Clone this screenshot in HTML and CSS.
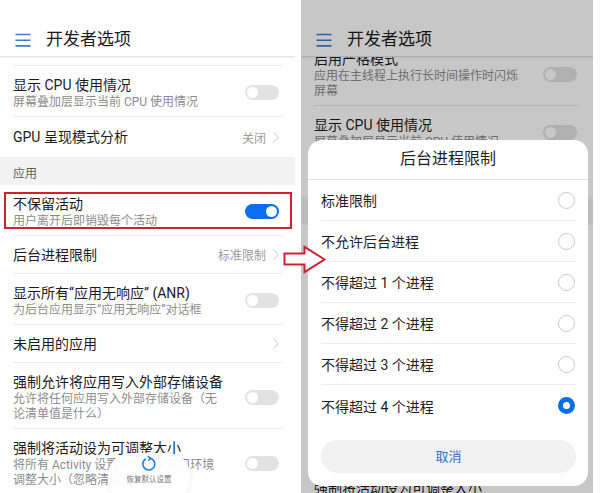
FILE: index.html
```html
<!DOCTYPE html>
<html lang="zh-CN">
<head>
<meta charset="utf-8">
<title>开发者选项</title>
<link rel="stylesheet" href="styles.css">
</head>
<body>
<div class="page">
  <div class="screen left">
    <header class="appbar">
      <svg class="menu" width="16" height="14" viewBox="0 0 16 14"><path d="M0.5 1.5H15.5M0.5 7.2H15.5M0.5 12.9H15.5" stroke="#3d7cc6" stroke-width="1.6" fill="none"/></svg>
      <span class="title">开发者选项</span>
    </header>
    <div class="list">
      <div class="stub"></div>
      <div class="item">
        <div class="text"><div class="t">显示 CPU 使用情况</div><div class="s">屏幕叠加层显示当前 CPU 使用情况</div></div>
        <span class="toggle"></span>
      </div>
      <div class="item single last">
        <div class="text"><div class="t">GPU 呈现模式分析</div></div>
        <span class="value">关闭</span><svg class="chev" width="6" height="11" viewBox="0 0 6 11"><path d="M0.7 0.7L5.2 5.5L0.7 10.3" stroke="#c4c4c4" stroke-width="1" fill="none"/></svg>
      </div>
      <div class="section">应用</div>
      <div class="item">
        <div class="text"><div class="t">不保留活动</div><div class="s">用户离开后即销毁每个活动</div></div>
        <span class="toggle on"></span>
      </div>
      <div class="item single">
        <div class="text"><div class="t">后台进程限制</div></div>
        <span class="value">标准限制</span><svg class="chev" width="6" height="11" viewBox="0 0 6 11"><path d="M0.7 0.7L5.2 5.5L0.7 10.3" stroke="#c4c4c4" stroke-width="1" fill="none"/></svg>
      </div>
      <div class="item">
        <div class="text"><div class="t">显示所有“应用无响应” (ANR)</div><div class="s">为后台应用显示“应用无响应”对话框</div></div>
        <span class="toggle"></span>
      </div>
      <div class="item single">
        <div class="text"><div class="t">未启用的应用</div></div>
        <svg class="chev" width="6" height="11" viewBox="0 0 6 11"><path d="M0.7 0.7L5.2 5.5L0.7 10.3" stroke="#c4c4c4" stroke-width="1" fill="none"/></svg>
      </div>
      <div class="item">
        <div class="text"><div class="t">强制允许将应用写入外部存储设备</div><div class="s">允许将任何应用写入外部存储设备（无论清单值是什么）</div></div>
        <span class="toggle"></span>
      </div>
      <div class="item">
        <div class="text"><div class="t">强制将活动设为可调整大小</div><div class="s">将所有 Activity 设置为可在多窗口环境调整大小（忽略清单值）</div></div>
        <span class="toggle"></span>
      </div>
    </div>
    <div class="highlight"></div>
    <div class="restore">
      <svg width="16" height="16" viewBox="0 0 16 16"><path d="M4.2 3.2A6 6 0 1 0 9 2.1" stroke="#2f7de6" stroke-width="1.7" fill="none" stroke-linecap="round"/><path d="M7.2 0.6L9.6 2.2L7.6 4.2" stroke="#2f7de6" stroke-width="1.5" fill="none" stroke-linecap="round" stroke-linejoin="round"/></svg>
      <span class="restore-label">恢复默认设置</span>
    </div>
  </div>

  <div class="screen right">
    <header class="appbar">
      <svg class="menu" width="16" height="14" viewBox="0 0 16 14"><path d="M0.5 1.5H15.5M0.5 7.2H15.5M0.5 12.9H15.5" stroke="#3d7cc6" stroke-width="1.6" fill="none"/></svg>
      <span class="title">开发者选项</span>
    </header>
    <div class="list behind">
      <div class="item">
        <div class="text"><div class="t">启用严格模式</div><div class="s">应用在主线程上执行长时间操作时闪烁屏幕</div></div>
        <span class="toggle"></span>
      </div>
      <div class="item">
        <div class="text"><div class="t">显示 CPU 使用情况</div><div class="s">屏幕叠加层显示当前 CPU 使用情况</div></div>
        <span class="toggle"></span>
      </div>
      <div class="item single last">
        <div class="text"><div class="t">GPU 呈现模式分析</div></div>
        <span class="value">关闭</span>
      </div>
      <div class="section">应用</div>
      <div class="item">
        <div class="text"><div class="t">不保留活动</div><div class="s">用户离开后即销毁每个活动</div></div>
        <span class="toggle on"></span>
      </div>
      <div class="item single">
        <div class="text"><div class="t">后台进程限制</div></div>
        <span class="value">标准限制</span>
      </div>
      <div class="item">
        <div class="text"><div class="t">显示所有“应用无响应” (ANR)</div><div class="s">为后台应用显示“应用无响应”对话框</div></div>
        <span class="toggle"></span>
      </div>
      <div class="item single">
        <div class="text"><div class="t">未启用的应用</div></div>
      </div>
      <div class="item">
        <div class="text"><div class="t">强制允许将应用写入外部存储设备</div><div class="s">允许将任何应用写入外部存储设备（无论清单值是什么）</div></div>
        <span class="toggle"></span>
      </div>
      <div class="item">
        <div class="text"><div class="t">强制将活动设为可调整大小</div><div class="s">将所有 Activity 设置为可在多窗口环境调整大小（忽略清单值）</div></div>
        <span class="toggle"></span>
      </div>
    </div>
    <div class="scrim"></div>
    <div class="dialog">
      <div class="dialog-title">后台进程限制</div>
      <div class="options">
        <div class="option"><span>标准限制</span><span class="radio"></span></div>
        <div class="option"><span>不允许后台进程</span><span class="radio"></span></div>
        <div class="option"><span>不得超过 1 个进程</span><span class="radio"></span></div>
        <div class="option"><span>不得超过 2 个进程</span><span class="radio"></span></div>
        <div class="option"><span>不得超过 3 个进程</span><span class="radio"></span></div>
        <div class="option"><span>不得超过 4 个进程</span><span class="radio checked"></span></div>
      </div>
      <div class="cancel">取消</div>
    </div>
  </div>

  <svg class="arrow" width="44" height="30" viewBox="0 0 44 30"><path d="M1.5 8.5H21.5V1.8L41.5 14.5L21.5 27.2V19.5H1.5Z" fill="#fff" stroke="#cf2230" stroke-width="2" stroke-linejoin="miter"/></svg>
</div>
</body>
</html>
```

FILE: styles.css
```css
* { box-sizing: border-box; }
html, body { margin: 0; padding: 0; background: #fff; }
body {
  width: 600px;
  height: 493px;
  overflow: hidden;
  font-family: Roboto, "Noto Sans CJK SC", "Noto Sans", sans-serif;
  color: #1b1b1b;
}
.page {
  position: relative;
  display: flex;
  gap: 6px;
  width: 600px;
  height: 493px;
}
.screen {
  position: relative;
  height: 493px;
  overflow: hidden;
  background: #fff;
}
.screen.left { width: 295px; }
.screen.right { width: 292px; }

.appbar {
  position: relative;
  z-index: 2;
  height: 57px;
  padding: 22px 0 0 15px;
  display: flex;
  align-items: center;
  background: #fff;
  border-bottom: 1px solid #e2e2e2;
  box-shadow: 0 1px 2px rgba(0,0,0,0.06);
}
.menu { flex: none; margin-top: 2px; }
.title {
  margin-left: 15px;
  font-size: 17px;
  line-height: 37px;
  color: #1a1a1a;
}

.list { position: relative; z-index: 1; }
.list.behind { margin-top: -17px; }

.stub {
  height: 9px;
  margin: 0 13px;
  border-bottom: 1px solid #ebebeb;
}
.item {
  display: flex;
  align-items: center;
  margin: 0 13px;
  padding: 9px 0 6px;
  border-bottom: 1px solid #ebebeb;
}
.item.single {
  height: 38px;
  padding: 0;
}
.item.single.last {
  height: 40px;
  border-bottom: none;
}
.text { flex: 1; min-width: 0; }
.t {
  font-size: 14px;
  line-height: 20px;
  color: #1b1b1b;
  white-space: nowrap;
}
.s {
  width: 212px;
  font-size: 12px;
  line-height: 15px;
  color: #8d8d8d;
}
.value {
  font-size: 12px;
  color: #9a9a9a;
  margin-right: 7px;
}
.chev { flex: none; margin-right: 3px; }

.section {
  height: 28px;
  padding: 10px 13px 0;
  background: #f2f2f2;
  font-size: 12px;
  line-height: 14px;
  color: #5e5e5e;
}

.toggle {
  position: relative;
  flex: none;
  width: 34px;
  height: 15px;
  margin-right: 3px;
  border-radius: 8px;
  background: #e2e2e2;
}
.toggle::after {
  content: "";
  position: absolute;
  top: 2px;
  left: 2px;
  width: 11px;
  height: 11px;
  border-radius: 50%;
  background: #fff;
}
.toggle.on { background: #0b6def; }
.toggle.on::after { left: 21px; }

.highlight {
  position: absolute;
  z-index: 3;
  left: 4px;
  top: 192px;
  width: 288px;
  height: 37px;
  border: 2px solid #cf2230;
}

.restore {
  position: absolute;
  z-index: 3;
  left: 108px;
  top: 453px;
  width: 82px;
  height: 48px;
  border-radius: 22px;
  background: rgba(255,255,255,0.96);
  box-shadow: 0 0 5px rgba(0,0,0,0.1);
  display: flex;
  flex-direction: column;
  align-items: center;
  padding-top: 3px;
}
.restore-label {
  margin-top: 3px;
  font-size: 7.5px;
  line-height: 10px;
  color: #777;
}

.scrim {
  position: absolute;
  inset: 0;
  z-index: 4;
  background: rgba(0,0,0,0.22);
}
.dialog {
  position: absolute;
  z-index: 5;
  left: 7px;
  top: 140px;
  width: 280px;
  height: 346px;
  border-radius: 14px;
  background: #fff;
}
.dialog-title {
  height: 40px;
  border-bottom: 1px solid #e4e4e4;
  text-align: center;
  font-size: 16px;
  line-height: 38px;
  color: #1e1e1e;
}
.options { padding: 0 12px 0 13px; }
.option {
  display: flex;
  align-items: center;
  justify-content: space-between;
  height: 41px;
  border-bottom: 1px solid #ececec;
  font-size: 14px;
  color: #1e1e1e;
}
.option:last-child { border-bottom: none; }
.radio {
  flex: none;
  width: 17px;
  height: 17px;
  margin-right: 1px;
  border-radius: 50%;
  border: 1px solid #c9c9c9;
}
.radio.checked { border: 5px solid #0b6ee8; }
.cancel {
  margin: 14px 12px 0 13px;
  height: 33px;
  border-radius: 17px;
  background: #f1f1f1;
  text-align: center;
  font-size: 13px;
  line-height: 33px;
  color: #2f72c4;
}

.arrow {
  position: absolute;
  z-index: 6;
  left: 283px;
  top: 245px;
}
```
